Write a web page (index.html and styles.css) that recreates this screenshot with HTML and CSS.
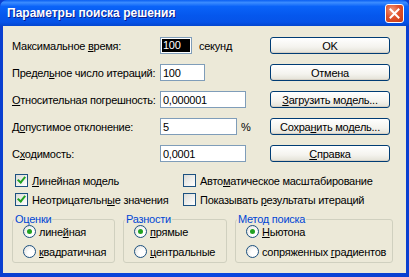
FILE: index.html
```html
<!DOCTYPE html>
<html lang="ru">
<head>
<meta charset="utf-8">
<title>Параметры поиска решения</title>
<link rel="stylesheet" href="styles.css">
</head>
<body>
<div class="window">
  <div class="titlebar">
    <span class="title">Параметры поиска решения</span>
    <span class="close"><svg width="11" height="11" viewBox="0 0 11 11"><path d="M1.5 1.5 L9.5 9.5 M9.5 1.5 L1.5 9.5" stroke="#fff" stroke-width="2" stroke-linecap="square"/></svg></span>
  </div>
  <div class="client">
    <div class="top">
      <div class="fields">
        <div class="row"><label class="lbl">Максимальное <u>в</u>ремя:</label><span class="input w1 sel"><span class="hl">100</span></span><span class="suffix">секунд</span></div>
        <div class="row"><label class="lbl">Предел<u>ь</u>ное число итераций:</label><span class="input w2">100</span></div>
        <div class="row"><label class="lbl"><u>О</u>тносительная погрешность:</label><span class="input w3">0,000001</span></div>
        <div class="row"><label class="lbl">Д<u>о</u>пустимое отклонение:</label><span class="input w4">5</span><span class="suffix pct">%</span></div>
        <div class="row"><label class="lbl">С<u>х</u>одимость:</label><span class="input w3">0,0001</span></div>
      </div>
      <div class="buttons">
        <button class="btn">OK</button>
        <button class="btn">Отмена</button>
        <button class="btn"><u>З</u>агрузить модель...</button>
        <button class="btn">Сохра<u>н</u>ить модель...</button>
        <button class="btn"><u>С</u>правка</button>
      </div>
    </div>
    <div class="checks">
      <div class="check"><span class="cb on"></span><span><u>Л</u>инейная модель</span></div>
      <div class="check"><span class="cb"></span><span>Авто<u>м</u>атическое масштабирование</span></div>
      <div class="check"><span class="cb on"></span><span>Неотрицательн<u>ы</u>е значения</span></div>
      <div class="check"><span class="cb"></span><span>Показывать <u>р</u>езультаты итераций</span></div>
    </div>
    <div class="groups">
      <fieldset class="group g1">
        <legend>Оценки</legend>
        <div class="radio"><span class="rb on"></span><span>лине<u>й</u>ная</span></div>
        <div class="radio"><span class="rb"></span><span><u>к</u>вадратичная</span></div>
      </fieldset>
      <fieldset class="group g2">
        <legend>Разности</legend>
        <div class="radio"><span class="rb on"></span><span><u>п</u>рямые</span></div>
        <div class="radio"><span class="rb"></span><span><u>ц</u>ентральные</span></div>
      </fieldset>
      <fieldset class="group g3">
        <legend>Метод поиска</legend>
        <div class="radio"><span class="rb on"></span><span><u>Н</u>ьютона</span></div>
        <div class="radio"><span class="rb"></span><span>сопряженных <u>г</u>радиентов</span></div>
      </fieldset>
    </div>
  </div>
</div>
</body>
</html>
```

FILE: styles.css
```css
html, body {
  margin: 0;
  padding: 0;
  width: 409px;
  height: 277px;
  overflow: hidden;
  background: #0842d6;
}
.window {
  width: 409px;
  height: 277px;
  box-sizing: border-box;
  display: flex;
  flex-direction: column;
  background: linear-gradient(to right, #0a3fd0, #0a47e0 50%, #0a3fd0);
  font-family: "Liberation Sans", Arial, sans-serif;
  font-size: 11px;
  letter-spacing: -0.25px;
  color: #000;
  white-space: nowrap;
}
.titlebar {
  height: 26px;
  flex: none;
  display: flex;
  align-items: center;
  justify-content: space-between;
  padding: 0 5px 0 7px;
  border-radius: 7px 7px 0 0;
  background: linear-gradient(to bottom, #0a5ff2 0%, #3b8cff 10%, #0a63f8 25%, #0557ed 60%, #0653e8 85%, #0446cf 100%);
}
.title {
  color: #fff;
  font-family: "Liberation Sans", Arial, sans-serif;
  font-weight: bold;
  font-size: 12px;
  letter-spacing: 0;
  text-shadow: 1px 1px 0 #0a1e8c;
}
.close {
  width: 19px;
  height: 19px;
  box-sizing: border-box;
  display: flex;
  align-items: center;
  justify-content: center;
  border: 1px solid #fff;
  border-radius: 3px;
  background: radial-gradient(circle at 35% 30%, #f09a7c 0%, #e0512c 45%, #c63b14 100%);
}
.client {
  flex: 1;
  margin: 0 3px 4px 3px;
  background: #ece9d8;
  padding: 11px 0 0 9px;
  box-sizing: border-box;
}
.top {
  display: flex;
}
.fields {
  width: 258px;
  display: flex;
  flex-direction: column;
  gap: 10px;
}
.row {
  display: flex;
  align-items: center;
  height: 17px;
}
.lbl {
  width: 148px;
  flex: none;
}
.input {
  height: 17px;
  box-sizing: border-box;
  border: 1px solid #7f9db9;
  background: #fff;
  padding: 0 2px;
  display: flex;
  align-items: center;
  flex: none;
}
.w1 { width: 32px; }
.w2 { width: 45px; }
.w3 { width: 86px; }
.w4 { width: 77px; }
.hl {
  background: #000;
  color: #fff;
  padding: 0 1px;
  line-height: 13px;
  width: 100%;
}
.sel { padding: 1px; }
.suffix { margin-left: 7px; }
.pct { margin-left: 4px; }
.buttons {
  display: flex;
  flex-direction: column;
  gap: 10px;
}
.btn {
  width: 120px;
  height: 17px;
  padding: 0;
  font: inherit;
  letter-spacing: inherit;
  color: #000;
  border: 1px solid #003c74;
  border-radius: 3px;
  background: linear-gradient(to bottom, #ffffff, #f4f3ee 60%, #e3e1d6);
  box-shadow: inset 0 -1px 0 #d6d0c5;
}
.checks {
  display: grid;
  grid-template-columns: 168px 1fr;
  row-gap: 6px;
  margin: 12px 0 0 3px;
}
.check, .radio {
  display: flex;
  align-items: center;
  height: 13px;
}
.cb {
  width: 13px;
  height: 13px;
  box-sizing: border-box;
  border: 1px solid #1c5180;
  background: linear-gradient(135deg, #dcdcd7, #fff);
  margin-right: 4px;
  flex: none;
  position: relative;
}
.cb.on::after {
  content: "";
  position: absolute;
  left: 3px;
  top: 0px;
  width: 3px;
  height: 6px;
  border: solid #21a121;
  border-width: 0 2px 2px 0;
  transform: rotate(40deg);
}
.groups {
  display: flex;
  gap: 8px;
  margin-top: 7px;
  margin-right: 13px;
}
.group {
  margin: 0;
  padding: 0 0 4px 10px;
  border: 1px solid #d0d0bf;
  border-radius: 3px;
  display: flex;
  flex-direction: column;
  gap: 7px;
}
.g1 { width: 103px; box-sizing: border-box; }
.g2 { width: 104px; box-sizing: border-box; }
.g3 { flex: 1; }
.group legend {
  color: #0046d5;
  padding: 0 1px;
  margin-left: -9px;
}
.rb {
  width: 13px;
  height: 13px;
  box-sizing: border-box;
  border: 1px solid #1c5180;
  border-radius: 50%;
  background: radial-gradient(circle at 65% 65%, #fff 30%, #dcdcd7 100%);
  margin-right: 3px;
  flex: none;
  display: flex;
  align-items: center;
  justify-content: center;
}
.rb.on::after {
  content: "";
  width: 5px;
  height: 5px;
  border-radius: 50%;
  background: #21a121;
}
u { text-decoration: underline; }
```
